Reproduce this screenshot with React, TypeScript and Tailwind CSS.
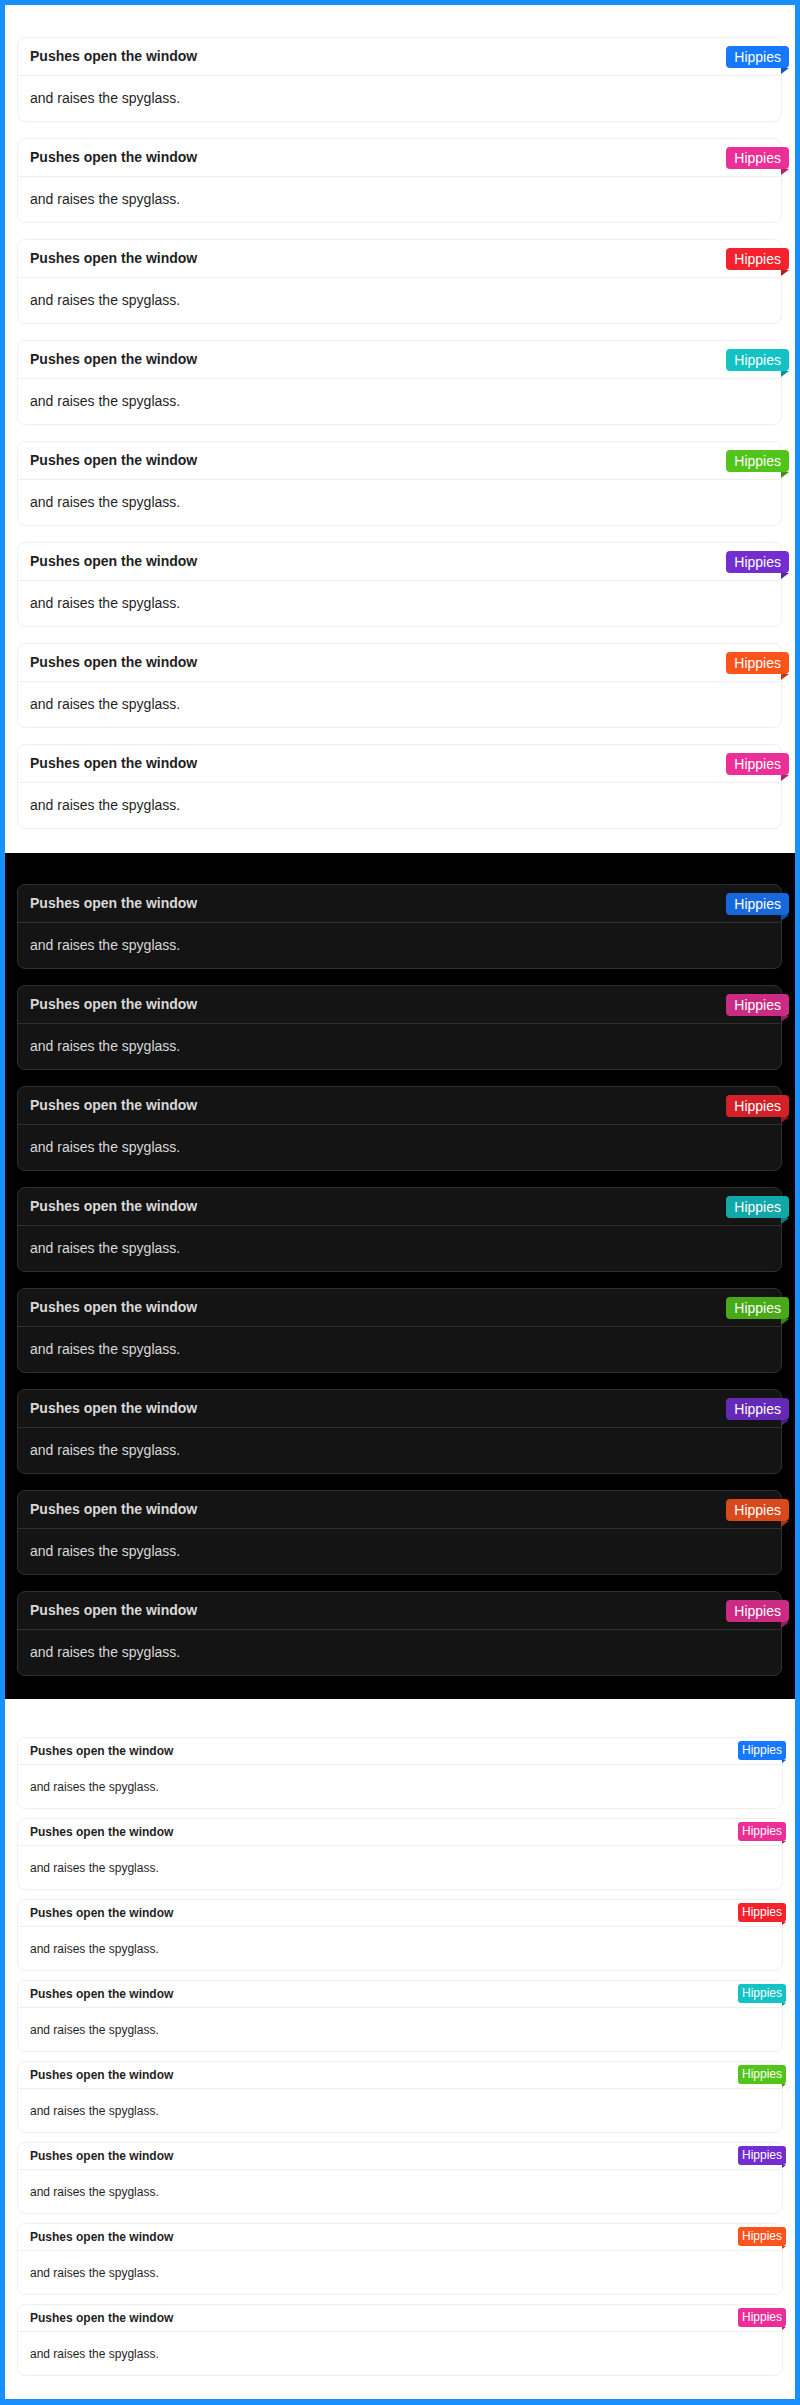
import React from "react";

type Tone = { bg: string; corner: string };

const lightTones: Tone[] = [
  { bg: "bg-[#1677ff]", corner: "#1159bf" },
  { bg: "bg-[#eb2f96]", corner: "#b02371" },
  { bg: "bg-[#f5222d]", corner: "#b81a22" },
  { bg: "bg-[#13c2c2]", corner: "#0e9292" },
  { bg: "bg-[#52c41a]", corner: "#3e9314" },
  { bg: "bg-[#722ed1]", corner: "#56239d" },
  { bg: "bg-[#fa541c]", corner: "#bc3f15" },
  { bg: "bg-[#eb2f96]", corner: "#b02371" },
];

const darkTones: Tone[] = [
  { bg: "bg-[#1668dc]", corner: "#114ea5" },
  { bg: "bg-[#cb2b83]", corner: "#982062" },
  { bg: "bg-[#d32029]", corner: "#9e181f" },
  { bg: "bg-[#13a8a8]", corner: "#0e7e7e" },
  { bg: "bg-[#49aa19]", corner: "#378013" },
  { bg: "bg-[#642ab5]", corner: "#4b2088" },
  { bg: "bg-[#d84a1b]", corner: "#a23814" },
  { bg: "bg-[#cb2b83]", corner: "#982062" },
];

type Variant = "light" | "dark" | "small";

function RibbonCard({ variant, tone }: { variant: Variant; tone: Tone }) {
  const small = variant === "small";
  const dark = variant === "dark";
  const cardCls = dark
    ? "relative rounded-lg border border-[#303030] bg-[#141414]"
    : "relative rounded-lg border border-[#f0f0f0] bg-white";
  const headCls = small
    ? "flex h-[27px] items-center border-b border-[#f0f0f0] px-3 text-[12px] font-bold text-[#1f1f1f]"
    : dark
    ? "flex h-[38px] items-center border-b border-[#303030] px-3 text-[14px] font-bold text-[#d9d9d9]"
    : "flex h-[38px] items-center border-b border-[#f0f0f0] px-3 text-[14px] font-bold text-[#1f1f1f]";
  const bodyCls = small
    ? "flex h-[43px] items-center px-3 text-[12px] text-[#1f1f1f]"
    : dark
    ? "flex h-[45px] items-center px-3 text-[14px] text-[#d9d9d9]"
    : "flex h-[45px] items-center px-3 text-[14px] text-[#1f1f1f]";
  const ribbonCls = small
    ? "absolute top-[3px] -right-1 h-[19px] rounded-[3px] px-1 text-[12px] leading-[19px] text-white whitespace-nowrap"
    : "absolute top-2 -right-2 h-[22px] rounded px-2 text-[14px] leading-[22px] text-white whitespace-nowrap";
  const cw = small ? 4 : 8;
  const ch = small ? 3 : 6;
  return (
    <div className={cardCls}>
      <div className={headCls}>Pushes open the window</div>
      <div className={bodyCls}>and raises the spyglass.</div>
      <div className={`${ribbonCls} ${tone.bg}`}>
        Hippies
        <svg
          className="absolute top-full right-0 block"
          width={cw}
          height={ch}
          viewBox={`0 0 ${cw} ${ch}`}
        >
          <polygon points={`0,0 ${cw},0 0,${ch}`} fill={tone.corner} />
        </svg>
      </div>
    </div>
  );
}

export default function App() {
  return (
    <div
      className="h-[2405px] w-[800px] border-[5px] border-b-[6px] border-[#1890ff] bg-white"
      style={{ fontFamily: '"Liberation Sans", Arial, sans-serif' }}
    >
      <div className="flex flex-col gap-4 bg-white pt-8 pb-6 pl-3 pr-[13px]">
        {lightTones.map((t, i) => (
          <RibbonCard key={i} variant="light" tone={t} />
        ))}
      </div>
      <div className="flex flex-col gap-4 bg-black pt-[31px] pb-[23px] pl-3 pr-[13px]">
        {darkTones.map((t, i) => (
          <RibbonCard key={i} variant="dark" tone={t} />
        ))}
      </div>
      <div className="flex flex-col gap-[9px] bg-white pt-[38px] pb-[23px] px-3">
        {lightTones.map((t, i) => (
          <RibbonCard key={i} variant="small" tone={t} />
        ))}
      </div>
    </div>
  );
}
